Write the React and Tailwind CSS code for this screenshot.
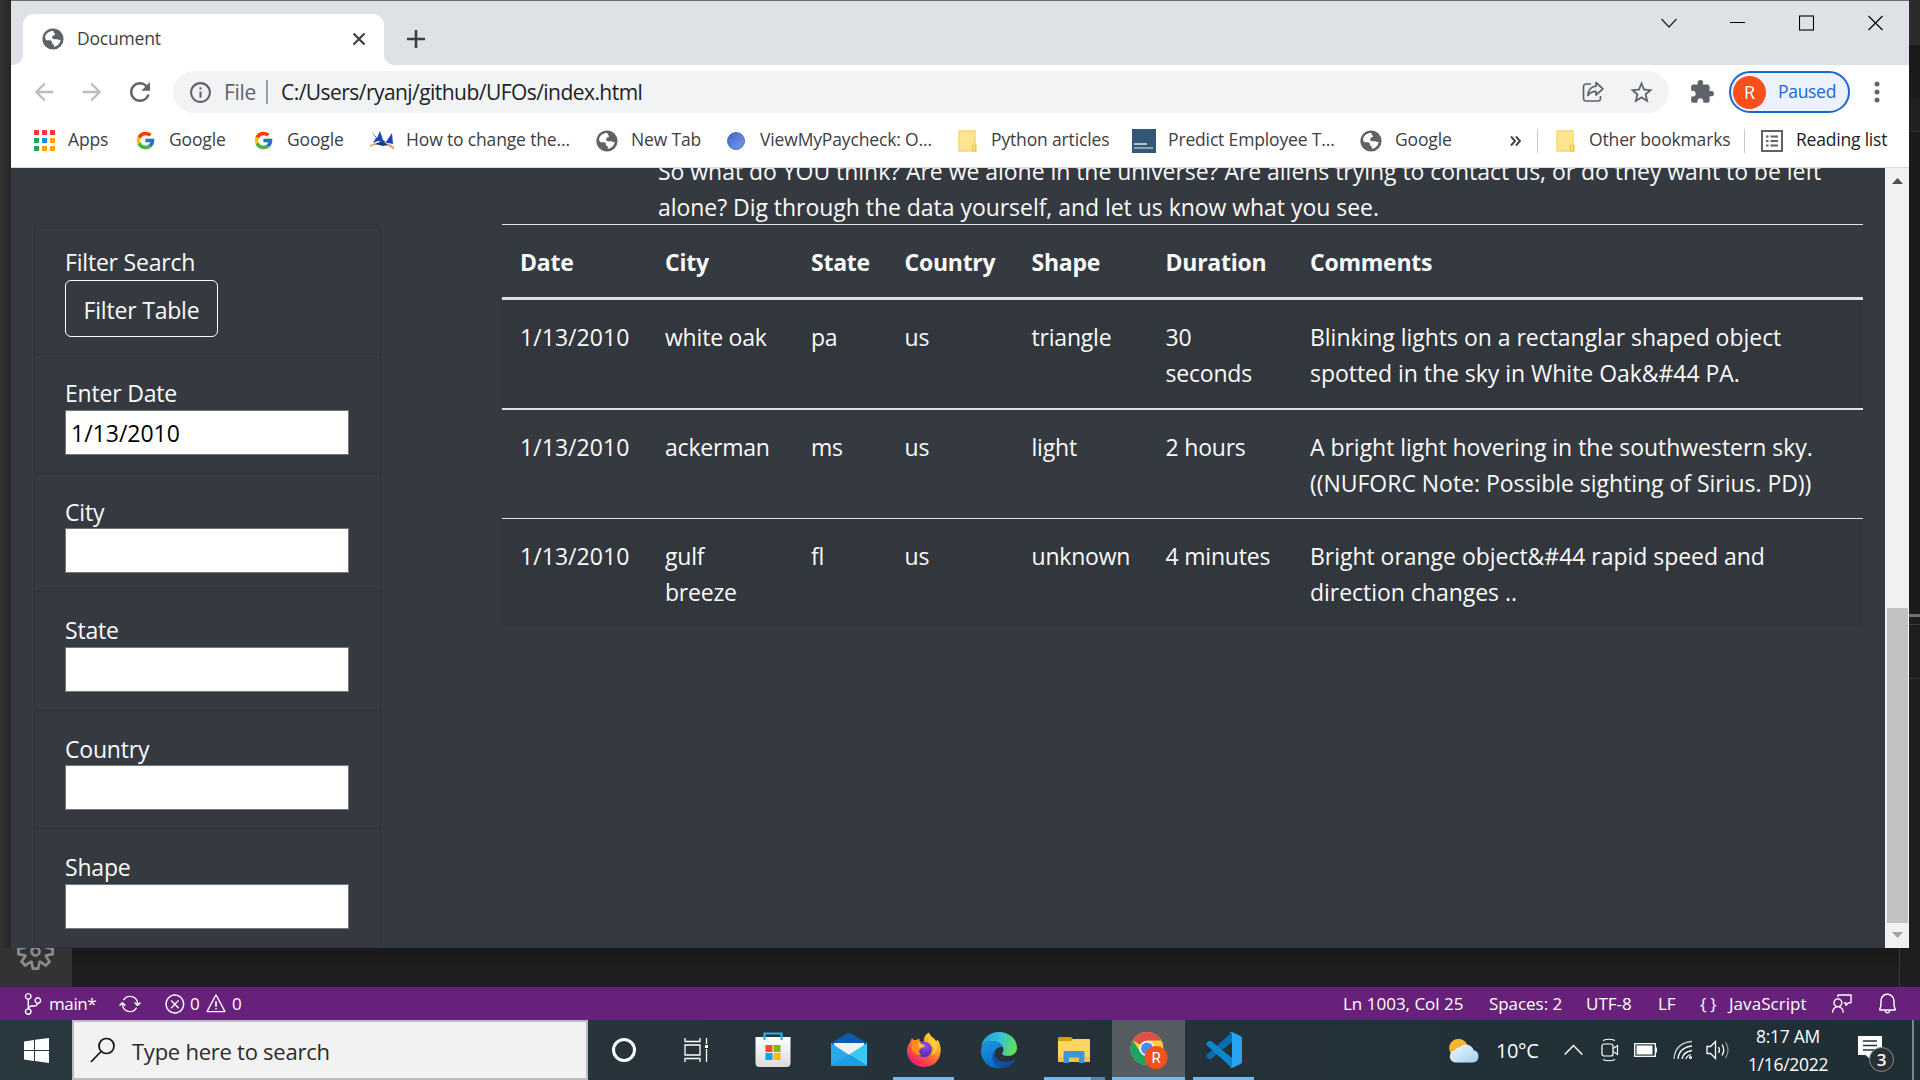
import React from "react";
import { VscSourceControl, VscSync, VscError, VscWarning, VscFeedback, VscBell, VscSettingsGear } from "react-icons/vsc";
import { MdExtension, MdStarBorder, MdInfoOutline, MdRefresh, MdArrowBack, MdArrowForward } from "react-icons/md";
import { FcGoogle } from "react-icons/fc";

function Globe() {
  return (
    <svg className="h-[22px] w-[22px] shrink-0" viewBox="0 0 22 22">
      <circle cx="11" cy="11" r="10.6" fill="#5f6368" />
      <path d="M11.5 3.2C8 2.6 4.4 5 3.2 8.6c-.3 1.4.3 3 1.2 3.6h3.3c1.4 0 2.2.8 2.2 2v1.2c1.8.2 2 1 2 3.4 3.4-.4 6.4-3 6.8-7-1 .4-2.3.3-3.2-.5h-3.1c-1.4 0-2.2-.9-2.2-2 0-1.5 1-2 2.6-2V5.600c-.7-.4-1.3-1.2-1.3-2.4z" fill="#fff" />
    </svg>
  );
}

function Folder() {
  return (
    <svg className="h-[22px] w-[19px] shrink-0" viewBox="0 0 19 22">
      <path d="M1 1h16v14h1v6H1z" fill="#ffe591" stroke="#fad66b" strokeWidth="1.4" />
      <path d="M14.500 21v-5.500h3V21z" fill="#ffe591" stroke="#f0c43c" strokeWidth="1.2" />
    </svg>
  );
}

const appColors = ["bg-[#f33]", "bg-[#f33]", "bg-[#f33]", "bg-[#2ba24c]", "bg-[#1a8cf0]", "bg-[#fba800]", "bg-[#2ba24c]", "bg-[#fba800]", "bg-[#fba800]"];

function Bookmark({ icon, label, className }) {
  return (
    <div className={"flex items-center whitespace-nowrap " + className}>
      <div className="flex w-[24px] shrink-0 items-center justify-center">{icon}</div>
      <span className="ml-[12px] pb-[2px]">{label}</span>
    </div>
  );
}

function TabStrip() {
  return (
    <div className="flex h-[64px] items-start bg-[#dee1e6]">
      <div className="flex h-[64px] w-[12px] items-end bg-white">
        <div className="h-full w-full rounded-br-[10px] bg-[#dee1e6]" />
      </div>
      <div className="h-full bg-white">
        <div className="h-[24px] bg-[#dee1e6]">
          <div className="h-[13px]" />
          <div className="h-[11px] rounded-t-[11px] bg-white" />
        </div>
        <div className="flex h-[27px] w-[361px] items-center pl-[19px] pr-[18px]">
          <Globe />
          <span className="ml-[13px] flex-1 text-[17.5px] tracking-[-0.2px] text-[#3c4043]">Document</span>
          <svg className="h-[14px] w-[14px]" viewBox="0 0 14 14"><path d="M1.500 1.500l11 11M12.500 1.500l-11 11" stroke="#3c4043" strokeWidth="2.200" /></svg>
        </div>
      </div>
      <div className="h-[64px] w-[12px] bg-white"><div className="h-full w-full rounded-bl-[10px] bg-[#dee1e6]" /></div>
      <svg className="ml-[11px] mt-[29px] h-[18px] w-[18px]" viewBox="0 0 18 18"><path d="M9 0v18M0 9h18" stroke="#3c4043" strokeWidth="2.600" /></svg>
      <div className="flex-1" />
      <div className="mr-[26px] mt-[14px] flex items-center">
        <svg className="mr-[53px] h-[16px] w-[16px]" viewBox="0 0 16 16"><path d="M.5 4L8 12l7.500-8" fill="none" stroke="#222" strokeWidth="1.200" /></svg>
        <svg className="mr-[54px] h-[16px] w-[15px]" viewBox="0 0 15 16"><path d="M0 7.500h15" stroke="#000" /></svg>
        <svg className="mr-[54px] h-[16px] w-[15px]" viewBox="0 0 15 16"><rect x=".5" y="1" width="14" height="14" fill="none" stroke="#000" strokeWidth="1.100" /></svg>
        <svg className="h-[16px] w-[15px]" viewBox="0 0 15 16"><path d="M.5 1l14 14M14.500 1l-14 14" stroke="#000" strokeWidth="1.100" /></svg>
      </div>
    </div>
  );
}

function Toolbar() {
  return (
    <div className="flex h-[54px] items-center bg-white pl-[19px] pr-[21px]">
      <MdArrowBack className="h-[28px] w-[28px] text-[#babcbe]" />
      <MdArrowForward className="ml-[20px] h-[28px] w-[28px] text-[#babcbe]" />
      <MdRefresh className="ml-[19px] h-[30px] w-[30px] text-[#5f6368]" />
      <div className="ml-[18px] flex h-[42px] w-[1496px] items-center rounded-full bg-[#f1f3f4] pl-[15px] pr-[14px] text-[21px]">
        <MdInfoOutline className="h-[25px] w-[25px] text-[#5f6368]" />
        <span className="ml-[11px] w-[32px] pt-[1px] tracking-[-0.3px] text-[#5f6368]">File</span>
        <div className="ml-[10px] h-[24px] w-[2px] bg-[#9aa0a6]" />
        <span className="ml-[13px] flex-1 pt-[2px] tracking-[-0.55px] text-[#202124]">C:/Users/ryanj/github/UFOs/index.html</span>
        <svg className="h-[24px] w-[24px]" viewBox="0 0 24 24" fill="none" stroke="#5f6368" strokeWidth="1.700" strokeLinejoin="round">
          <path d="M10 4H5a2.500 2.500 0 0 0-2.500 2.500v12A2.500 2.500 0 0 0 5 21h12a2.500 2.500 0 0 0 2.500-2.500V16" />
          <path d="M15 2.500l7 6.300-7 6.200v-3.600c-3.600 0-6.300 1.300-8 4.100 0-5 3-8.800 8-9.300z" />
        </svg>
        <MdStarBorder className="ml-[23px] h-[27px] w-[27px] text-[#5f6368]" />
      </div>
      <MdExtension className="ml-[20px] h-[26px] w-[26px] text-[#5f6368]" />
      <div className="ml-[14px] flex h-[42px] w-[121px] items-center rounded-full border-2 border-[#1a67d2] bg-[#ecf2fb] pl-[2px]">
        <div className="flex h-[33px] w-[33px] items-center justify-center rounded-full bg-[#f8501c] text-[18px] text-white">R</div>
        <span className="ml-[12px] pb-[1px] text-[17.5px] tracking-[-0.3px] text-[#1a67d2]">Paused</span>
      </div>
      <svg className="ml-[24px] h-[22px] w-[6px]" viewBox="0 0 6 22" fill="#5f6368"><circle cx="3" cy="3" r="2.500" /><circle cx="3" cy="11" r="2.500" /><circle cx="3" cy="19" r="2.500" /></svg>
    </div>
  );
}

function Bookmarks() {
  return (
    <div className="flex h-[49px] items-center border-b border-[#d5d7da] bg-white pb-[5px] pl-[21px] text-[17.5px] tracking-[-0.15px] text-[#3c4043]">
      <Bookmark className="w-[101px]" label="Apps" icon={
        <div className="grid grid-cols-3 gap-[3px]">{appColors.map((c, i) => <div key={i} className={"h-[5px] w-[5px] " + c} />)}</div>} />
      <Bookmark className="w-[118px]" label="Google" icon={<FcGoogle className="h-[21px] w-[21px]" />} />
      <Bookmark className="w-[119px]" label="Google" icon={<FcGoogle className="h-[21px] w-[21px]" />} />
      <Bookmark className="w-[225px]" label="How to change the..." icon={
        <svg className="h-[24px] w-[24px]" viewBox="0 0 24 24">
          <path d="M0 18c7-4 17-4 24 3v-3c-7-6-18-5-24-2z" fill="#e9a070" />
          <path d="M1 2l6 7 3-7 3 9 3 2 6-9 1 11-5-1-10-2-5 2 3-5z" fill="#1746c0" />
          <path d="M5 15l7-3 6 4-5 1z" fill="#18358d" />
        </svg>} />
      <Bookmark className="w-[129px]" label="New Tab" icon={<Globe />} />
      <Bookmark className="w-[231px]" label="ViewMyPaycheck: O..." icon={
        <div className="h-[18px] w-[18px] rounded-full border border-[#4867c7] bg-linear-to-tl from-[#7b9ae6] to-[#4565ca]" />} />
      <Bookmark className="w-[177px]" label="Python articles" icon={<Folder />} />
      <Bookmark className="w-[227px]" label="Predict Employee T..." icon={
        <div className="flex h-[24px] w-[24px] flex-col justify-end gap-[2px] bg-[#325779] pb-[4px] pl-[2px]">
          <div className="h-[2px] w-[13px] bg-[#b5c3d0]" /><div className="h-[2px] w-[19px] bg-[#8fa4b7]" />
        </div>} />
      <Bookmark className="w-[151px]" label="Google" icon={<Globe />} />
      <svg className="h-[12px] w-[11px]" viewBox="0 0 11 12"><path d="M1 1.500l4 4.500-4 4.500M6 1.500L10 6l-4 4.500" fill="none" stroke="#3c4043" strokeWidth="1.900" /></svg>
      <div className="ml-[16px] h-[24px] w-px bg-[#c6c9cd]" />
      <Bookmark className="ml-[15px] w-[191px]" label="Other bookmarks" icon={<Folder />} />
      <div className="h-[24px] w-px bg-[#c6c9cd]" />
      <div className="ml-[16px] flex items-center whitespace-nowrap text-[#202124]">
        <svg className="h-[22px] w-[22px]" viewBox="0 0 22 22"><rect x="1" y="1" width="20" height="20" fill="none" stroke="#5f6368" strokeWidth="2" /><path d="M5 6.500h2.500M9.500 6.500H17M5 11h2.500M9.500 11H17M5 15.500h2.500M9.500 15.500H17" stroke="#5f6368" strokeWidth="2" /></svg>
        <span className="ml-[13px] pb-[2px] tracking-[-0.2px]">Reading list</span>
      </div>
    </div>
  );
}

const filters = [["Enter Date", "1/13/2010"], ["City", ""], ["State", ""], ["Country", ""], ["Shape", ""]];
const columns = ["Date", "City", "State", "Country", "Shape", "Duration", "Comments"];
const rows = [
  ["1/13/2010", "white oak", "pa", "us", "triangle", "30\nseconds", "Blinking lights on a rectanglar shaped object\nspotted in the sky in White Oak&#44 PA."],
  ["1/13/2010", "ackerman", "ms", "us", "light", "2 hours", "A bright light hovering in the southwestern sky.\n((NUFORC Note: Possible sighting of Sirius. PD))"],
  ["1/13/2010", "gulf\nbreeze", "fl", "us", "unknown", "4 minutes", "Bright orange object&#44 rapid speed and\ndirection changes .."],
];
const rowStyles = ["h-[108px] bg-[#32363d]", "h-[110px] border-t-2 border-[#dee2e6]", "h-[109px] border-t border-[#dee2e6] bg-[#32363d]"];
const cellTracking = ["tracking-[0.05px]", "", "", "", "", "", "tracking-[-0.03px]"];
const grid = "grid grid-cols-[145px_146px_93.5px_127px_134px_144.5px_571px]";

function Page() {
  return (
    <div className="flex h-[780px] bg-[#353a41] text-[23px] leading-[36px] tracking-[-0.2px] text-[#fbfbfb]">
      <div className="ml-[23px] mt-[56px] h-[724px] w-[347px] shrink-0 rounded-[6px] border border-[#2f3339]">
        <div className="h-[130px] border-b border-[#2f3339] pl-[30px] pt-[18.5px]">
          <div>Filter Search</div>
          <div className="flex h-[57px] w-[153px] items-center justify-center rounded-[6px] border border-white pt-[3px]">Filter Table</div>
        </div>
        {filters.map(([label, value], i) => (
          <div key={label} className={"h-[118.5px] pl-[30px] pt-[20px] " + (i < 4 ? "border-b border-[#2f3339]" : "")}>
            <div className="h-[34.5px]">{label}</div>
            <div className="h-[45px] w-[284px] border border-[#767676] bg-white pl-[5px] pt-[4px] tracking-[0] text-black">{value}</div>
          </div>
        ))}
      </div>
      <div className="ml-[121px] w-[1361px] shrink-0">
        <div className="h-[56px] overflow-hidden whitespace-nowrap pl-[156px] tracking-[-0.04px]">
          <div className="-mt-[15px]">So what do YOU think? Are we alone in the universe? Are aliens trying to contact us, or do they want to be left</div>
          <div>alone? Dig through the data yourself, and let us know what you see.</div>
        </div>
        <div className={"h-[76px] border-b-[3px] border-t border-[#dee2e6] pt-[19px] font-bold tracking-[-0.25px] " + grid}>
          {columns.map((c) => <div key={c} className="pl-[18px]">{c}</div>)}
        </div>
        {rows.map((r, i) => (
          <div key={i} className={rowStyles[i] + " pt-[19px] " + grid}>
            {r.map((c, j) => <div key={j} className={"whitespace-pre pl-[18px] " + cellTracking[j]}>{c}</div>)}
          </div>
        ))}
      </div>
      <div className="flex-1" />
      <div className="flex h-full w-[24px] flex-col items-center bg-[#f1f1f1]">
        <svg className="mt-[10px] h-[6px] w-[11px]" viewBox="0 0 11 6"><path d="M5.500 0L11 6H0z" fill="#505050" /></svg>
        <div className="mt-[424px] h-[315px] w-[21px] bg-[#c1c1c1]" />
        <svg className="mt-[9px] h-[6px] w-[11px]" viewBox="0 0 11 6"><path d="M0 0h11L5.500 6z" fill="#a3a3a3" /></svg>
      </div>
    </div>
  );
}

function StatusBar() {
  return (
    <div className="flex h-[33px] items-center bg-[#68217a] pl-[22px] text-[17px] text-white">
      <VscSourceControl className="h-[22px] w-[22px]" />
      <span className="ml-[5px] w-[70px] tracking-[-0.4px]">main*</span>
      <VscSync className="h-[22px] w-[22px]" />
      <VscError className="ml-[23px] h-[22px] w-[22px]" />
      <span className="ml-[4px] w-[15px]">0</span>
      <VscWarning className="h-[22px] w-[22px]" />
      <span className="ml-[5px] flex-1">0</span>
      <span className="w-[146px] whitespace-nowrap">Ln 1003, Col 25</span>
      <span className="w-[97px] tracking-[-0.05px]">Spaces: 2</span>
      <span className="w-[72px]">UTF-8</span>
      <span className="w-[42px]">LF</span>
      <span className="w-[29px] whitespace-nowrap tracking-[-0.3px]">{"{ }"}</span>
      <span className="w-[103px] tracking-[0.05px]">JavaScript</span>
      <VscFeedback className="h-[21px] w-[21px]" />
      <VscBell className="ml-[23px] mr-[21px] h-[23px] w-[23px]" />
    </div>
  );
}

function Slot({ children, className, bar }) {
  return (
    <div className={"flex h-[60px] shrink-0 flex-col items-center " + className}>
      <div className="flex h-[57px] items-center justify-center pt-[3px]">{children}</div>
      {bar}
    </div>
  );
}

function StoreIcon() {
  return (
    <svg className="h-[36px] w-[36px]" viewBox="0 0 36 36">
      <defs><linearGradient id="bag" x1="0" y1="0" x2="0" y2="1"><stop offset="0" stopColor="#fff" /><stop offset="1" stopColor="#dcdcdc" /></linearGradient></defs>
      <path d="M.5 5h35v26a4 4 0 0 1-4 4h-27a4 4 0 0 1-4-4z" fill="url(#bag)" />
      <path d="M9.500 8V1.500h17V8" fill="none" stroke="#24b2ee" strokeWidth="2.200" />
      <path d="M10.500 13h7v7h-7z" fill="#f25022" /><path d="M18.500 13h7v7h-7z" fill="#7fba00" />
      <path d="M10.500 21h7v7h-7z" fill="#00a4ef" /><path d="M18.500 21h7v7h-7z" fill="#ffb900" />
    </svg>
  );
}

function MailIcon() {
  return (
    <svg className="h-[36px] w-[36px]" viewBox="0 0 36 36">
      <path d="M0 11L16 1.500q2-1 4 0L36 11v4H0z" fill="#0a5cab" />
      <path d="M3 11h30v4L19 24 3 15z" fill="#f1f1f1" />
      <path d="M0 11l19 12.500L34 34H1.500Q0 34 0 32.500z" fill="#2aa9ea" />
      <path d="M36 11L18 22.500 36 34z" fill="#3bc9f3" />
      <path d="M18 22.500L36 34H1.500Q0 34 0 33z" fill="#1c9fe4" />
    </svg>
  );
}

function FirefoxIcon() {
  return (
    <svg className="h-[36px] w-[36px]" viewBox="0 0 36 36">
      <defs>
        <linearGradient id="fox" x1="1" y1="0" x2=".25" y2="1"><stop offset="0" stopColor="#fff44f" /><stop offset=".35" stopColor="#ffb02c" /><stop offset=".65" stopColor="#ff5a3a" /><stop offset="1" stopColor="#e6187c" /></linearGradient>
        <radialGradient id="foxcore" cx=".6" cy=".3"><stop offset="0" stopColor="#9a4cf0" /><stop offset="1" stopColor="#5a35b8" /></radialGradient>
      </defs>
      <path d="M23 .5c1 4 5 5 7 8.500l2-1c3 6 3.500 11 1.500 16.500C31 31.500 25 35 18 35 8.500 35 1 28 1 19c0-4 1.500-7 3.500-9.500L6 6l2.500 3L13 6.500l1 3 4 .5C17 6 20 2 23 .5z" fill="url(#fox)" />
      <circle cx="18" cy="17.500" r="7.800" fill="url(#foxcore)" />
      <path d="M6 9c3-2 6-.5 8 2 1 1.800 4 1 4.500 3-1 2-4 2-5 4-.8 2 .3 4 2 5-5 1-9-3-10.500-7z" fill="#ff8a22" />
      <path d="M12 10l7 3.500c-1 2-4 1.500-6 3z" fill="#ffc22f" />
      <path d="M22 9c6 3 7 10 3 14 6-1 8-8 4-13-3-2-5-3-5-6z" fill="#ffd640" opacity=".8" />
    </svg>
  );
}

function EdgeIcon() {
  return (
    <svg className="h-[36px] w-[36px]" viewBox="0 0 36 36">
      <defs>
        <linearGradient id="edgeTop" x1="0" y1=".4" x2="1" y2=".6"><stop offset="0" stopColor="#1f9fdb" /><stop offset=".5" stopColor="#35c1d8" /><stop offset="1" stopColor="#66e04e" /></linearGradient>
        <linearGradient id="edgeBody" x1="0" y1="0" x2=".5" y2="1"><stop offset="0" stopColor="#1b9de2" /><stop offset="1" stopColor="#0868c8" /></linearGradient>
      </defs>
      <path d="M0 16C1 6 9 0 18 0c10 0 18 7 18 15.500C36 21 32 24 27 24c-4 0-6-1.200-6-2.500 0-.8 1.500-1.500 1.500-4C22.500 13 17 8.500 10.500 9 5 9.500 1.500 12 0 16z" fill="url(#edgeTop)" />
      <path d="M0 18C1 12 6 9 11 9c5 0 9 2.500 11 6-5-.5-8.500 2-8.500 7 0 7 6 12 10 12.800C21 36 18 36 17 36 7 36-.5 28 0 18z" fill="url(#edgeBody)" />
      <path d="M13.500 21c0 5.500 5 9 11 9 4 0 7-1.500 9-2.800.8-.2 1 .3.600.8C31 33.500 25.500 36 20 35.800 14 34 11 29 11.500 24c.2-2 1-4 2.500-5.500z" fill="#124f9e" />
    </svg>
  );
}

function ExplorerIcon() {
  return (
    <svg className="h-[28px] w-[32px]" viewBox="0 0 32 28">
      <path d="M0 2q0-1 1-1h11q2 0 3 2v3H0z" fill="#e09a00" />
      <path d="M0 5h13l2-2h16q1 0 1 1v21q0 1-1 1H1q-1 0-1-1z" fill="#ffd561" />
      <path d="M0 21h32v4q0 1-1 1H1q-1 0-1-1z" fill="#f8c33f" />
      <path d="M5.500 27V16.500q0-1.500 1.500-1.500h18q1.500 0 1.500 1.500V27H21v-5.500H11V27z" fill="#3a97dc" />
    </svg>
  );
}

function ChromeIcon() {
  return (
    <svg className="h-[38px] w-[38px]" viewBox="0 0 38 38">
      <circle cx="17" cy="17.500" r="16.500" fill="#ffcd40" />
      <path d="M17 17.500L2.700 9.200A16.500 16.500 0 0 1 31.300 9.500H17z" fill="#dd5144" />
      <path d="M17 34A16.500 16.500 0 0 1 2.700 9.200L11 22l8 3z" fill="#1da462" />
      <circle cx="17" cy="17.500" r="7.800" fill="#f3f3f3" />
      <circle cx="17" cy="17.500" r="6" fill="#4c8bf5" />
      <circle cx="26" cy="26.500" r="11.500" fill="#f4511e" />
      <text x="26" y="32" textAnchor="middle" fontSize="15" fill="#fff" className="font-['Roboto']">R</text>
    </svg>
  );
}

function CodeIcon() {
  return (
    <svg className="h-[36px] w-[36px]" viewBox="0 0 36 36">
      <path d="M26 0v10L5 27q-1 .8-2 0L.6 25q-1-1 0-2z" fill="#0a6cb0" />
      <path d="M26 36V26L5 9q-1-.8-2 0L.6 11q-1 1 0 2z" fill="#0b86d0" />
      <path d="M26 0l8.500 4q1.500.8 1.500 2.300v23.400q0 1.500-1.500 2.300L26 36q-1.500.3-2.500-.8 2 .8 2.500-1.500V2.300Q25.500 0 23.500.8 24.500-.3 26 0z" fill="#27a3f2" />
    </svg>
  );
}

function Tray() {
  return (
    <div className="flex h-[60px] items-center">
      <svg className="h-[25px] w-[31px]" viewBox="0 0 31 25">
        <defs><linearGradient id="cloud" x1="0" y1="0" x2="1" y2="1"><stop offset="0" stopColor="#f2faff" /><stop offset="1" stopColor="#9fd0f2" /></linearGradient></defs>
        <circle cx="9.500" cy="10" r="9.300" fill="#fbb62b" />
        <path d="M6.500 24.500a6 6 0 0 1-.8-11.900 5 5 0 0 1 5-3 8 8 0 0 1 14 2.700 6.200 6.200 0 0 1-.7 12.200z" fill="url(#cloud)" />
      </svg>
      <span className="ml-[16px] w-[68px] pt-[2px] text-[20px] tracking-[-0.4px]">10°C</span>
      <svg className="h-[12px] w-[19px]" viewBox="0 0 19 12" fill="none" stroke="#fff" strokeWidth="1.500"><path d="M.7 10.500l8.800-9 8.800 9" /></svg>
      <svg className="ml-[18px] h-[24px] w-[18px]" viewBox="0 0 18 24" fill="none" stroke="#fff" strokeWidth="1.200"><rect x="1" y="6" width="11" height="12" rx="2" /><path d="M12 10.500L16.500 7.500v9L12 13.500M2 2.500Q8 0 14 2.500M2 21.500q6 2.500 12 0" /></svg>
      <svg className="ml-[15px] h-[14px] w-[24px]" viewBox="0 0 24 14"><rect x=".7" y=".7" width="20.600" height="12.600" fill="none" stroke="#fff" strokeWidth="1.300" /><path d="M2.500 2.500h16v9h-16zM21.500 4.500H23v5h-1.500z" fill="#fff" /></svg>
      <svg className="ml-[15px] h-[20px] w-[20px]" viewBox="0 0 20 20" fill="none" stroke="#fff" strokeWidth="1.300"><path d="M1 19Q2 3 19 1.500" opacity=".75" /><path d="M5 19Q6 7.500 19 6M9 19q1-7 10-8.500M13 19q.5-3 5-4.500" /><circle cx="17.500" cy="17.500" r="1.500" fill="#fff" stroke="none" /></svg>
      <svg className="ml-[13px] h-[20px] w-[24px]" viewBox="0 0 24 20" fill="none" stroke="#fff" strokeWidth="1.300"><path d="M1 6.500h3.500L9.500 1.500v17l-5-5H1z" /><path d="M12.500 7q2 3 0 6M16 4.500q3.500 5.500 0 11" /><path d="M19.500 2q5 8 0 16" opacity=".45" /></svg>
      <div className="ml-[15px] flex w-[86px] flex-col items-center whitespace-nowrap text-[17.5px] leading-[28px] tracking-[-0.3px]"><span>8:17 AM</span><span>1/16/2022</span></div>
      <svg className="ml-[27px] mt-[8px] h-[38px] w-[37px]" viewBox="0 0 37 38">
        <path d="M0 1h24v19H13l-1 4-4.500-4H0z" fill="#fff" />
        <path d="M5 6h14M5 10.500h14M5 15h14" stroke="#26323a" strokeWidth="1.300" />
        <circle cx="23.500" cy="24.500" r="12" fill="#2b3034" stroke="#858a8d" />
        <text x="23.500" y="30.500" textAnchor="middle" fontSize="17" fontWeight="600" fill="#fff">3</text>
      </svg>
      <div className="ml-[17px] mr-[6px] h-[60px] w-[2px] bg-[#7d868a]" />
    </div>
  );
}

function Taskbar() {
  return (
    <div className="flex h-[60px] bg-linear-to-r from-[#29373e] via-[#26323a] to-[#1f2f36] text-white">
      <div className="flex w-[72px] items-center justify-center">
        <svg className="h-[25px] w-[25px]" viewBox="0 0 25 25" fill="#fff"><path d="M0 3.500L10 2v10H0zM11 1.800L25 0v12H11zM0 13h10v10L0 21.500zM11 13h14v12l-14-2z" /></svg>
      </div>
      <div className="flex w-[516px] items-center border-2 border-[#bcbcbc] bg-[#f2f2f2] pl-[16px] text-[22px] tracking-[-0.25px] text-[#2b2b2b]">
        <svg className="h-[26px] w-[26px]" viewBox="0 0 26 26" fill="none" stroke="#111" strokeWidth="1.700"><circle cx="16.500" cy="9" r="7.500" /><path d="M11 14.500L1 25" /></svg>
        <span className="ml-[16px] pt-[3px]">Type here to search</span>
      </div>
      <Slot className="w-[71px]"><div className="h-[24px] w-[24px] rounded-full border-[3px] border-white" /></Slot>
      <Slot className="w-[75px]"><svg className="h-[24px] w-[25px]" viewBox="0 0 25 24" fill="none" stroke="#fff" strokeWidth="1.300"><path d="M1 0v3.500h15V0M1 7h15v10H1zM1 24v-3.500h15V24M22.500 0v6M22.500 11v13" /><path d="M21 7h3v3h-3z" fill="#fff" stroke="none" /></svg></Slot>
      <Slot className="w-[77px]"><StoreIcon /></Slot>
      <Slot className="w-[75px]"><MailIcon /></Slot>
      <Slot className="w-[75px]" bar={<div className="h-[3px] w-[61px] bg-[#76b9ed]" />}><FirefoxIcon /></Slot>
      <Slot className="w-[75px]"><EdgeIcon /></Slot>
      <Slot className="w-[76px]" bar={<div className="flex h-[3px] w-[61px]"><div className="w-[47px] bg-[#76b9ed]" /><div className="w-[14px] bg-[#5a86ac]" /></div>}><ExplorerIcon /></Slot>
      <Slot className="w-[73px] bg-[#555d63]" bar={<div className="h-[3px] w-full bg-[#76b9ed]" />}><ChromeIcon /></Slot>
      <Slot className="w-[77px]" bar={<div className="h-[3px] w-[61px] bg-[#76b9ed]" />}><CodeIcon /></Slot>
      <div className="flex-1" />
      <Tray />
    </div>
  );
}

export default function App() {
  return (
    <div className="h-[1080px] w-[1920px] overflow-hidden bg-[#1e1e1e] font-['Open_Sans','Noto_Sans',sans-serif]">
      <div className="flex h-[948px]">
        <div className="w-[11px] bg-linear-to-r from-[#333] to-[#262626]" />
        <div className="w-[1898px] border-t border-[#6b6b6d]"><TabStrip /><Toolbar /><Bookmarks /><Page /></div>
        <div className="flex w-[11px] flex-col">
          <div className="h-[45px] bg-[#2b2b2b]" />
          <div className="h-[53px] bg-[#1a1a1a]" />
          <div className="h-[34px] border-b border-[#303030] bg-[#202020]" />
          <div className="h-[482px] bg-[#1b1b1b]" />
          <div className="h-[3px] bg-[#6e6e6e]" />
          <div className="h-[8px] border-b border-[#3a3a3a]" />
          <div className="h-[53px]" />
          <div className="h-px bg-[#333]" />
        </div>
      </div>
      <div className="flex h-[39px] overflow-hidden">
        <div className="w-[72px] bg-[#333] pl-[17px]"><VscSettingsGear className="-mt-[15px] h-[37px] w-[37px] text-[#8a8a8a]" /></div>
        <div className="w-[1828px] border-r border-[#3a3a3a] bg-linear-to-b from-[#191919] to-[#1e1e1e] to-50%" />
      </div>
      <StatusBar />
      <Taskbar />
    </div>
  );
}
